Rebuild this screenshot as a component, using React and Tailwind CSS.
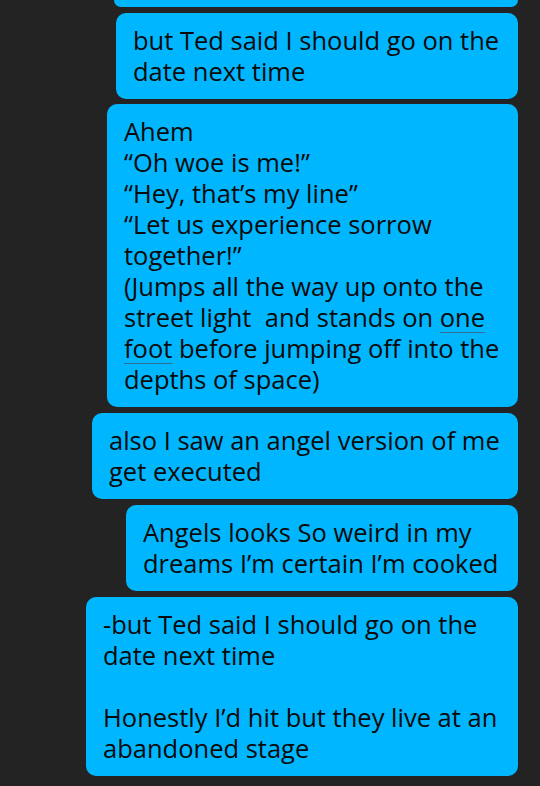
const messages = [
  {
    width: 'w-[402px]',
    gap: 'mt-[6px]',
    lines: ['but Ted said I should go on the', 'date next time'],
  },
  {
    width: 'w-[411px]',
    gap: 'mt-[5px]',
    lines: [
      'Ahem',
      '\u201cOh woe is me!\u201d',
      '\u201cHey, that\u2019s my line\u201d',
      '\u201cLet us experience sorrow',
      'together!\u201d',
      '(Jumps all the way up onto the',
      <>street light  and stands on <span className="underline decoration-[#2f6f94] decoration-1 underline-offset-[5px]">one</span></>,
      <><span className="underline decoration-[#2f6f94] decoration-1 underline-offset-[5px]">foot</span> before jumping off into the</>,
      'depths of space)',
    ],
  },
  {
    width: 'w-[426px]',
    gap: 'mt-[6px]',
    lines: ['also I saw an angel version of me', 'get executed'],
  },
  {
    width: 'w-[392px]',
    gap: 'mt-[6px]',
    lines: ['Angels looks So weird in my', 'dreams I\u2019m certain I\u2019m cooked'],
  },
  {
    width: 'w-[432px]',
    gap: 'mt-[6px]',
    lines: [
      '-but Ted said I should go on the',
      'date next time',
      '\u00a0',
      'Honestly I\u2019d hit but they live at an',
      'abandoned stage',
    ],
  },
]

function Bubble({ width, gap, lines }) {
  return (
    <div
      className={`${width} ${gap} bg-[#00b6ff] rounded-[10px] pl-[17px] pr-2 py-3 text-[25.5px] leading-[31px] text-[#0a0a0a] whitespace-pre`}
    >
      {lines.map((line, i) => (
        <div key={i}>{line}</div>
      ))}
    </div>
  )
}

export default function App() {
  return (
    <div
      className="w-[540px] h-[786px] overflow-hidden bg-[#232323] flex flex-col items-end pr-[22px]"
      style={{ fontFamily: '"Open Sans", "Noto Sans", sans-serif' }}
    >
      {/* tail of the previous message, cut off by the top edge */}
      <div className="w-[404px] h-[7px] bg-[#00b6ff] rounded-b-[10px] shrink-0" />
      {messages.map((m, i) => (
        <Bubble key={i} {...m} />
      ))}
    </div>
  )
}
